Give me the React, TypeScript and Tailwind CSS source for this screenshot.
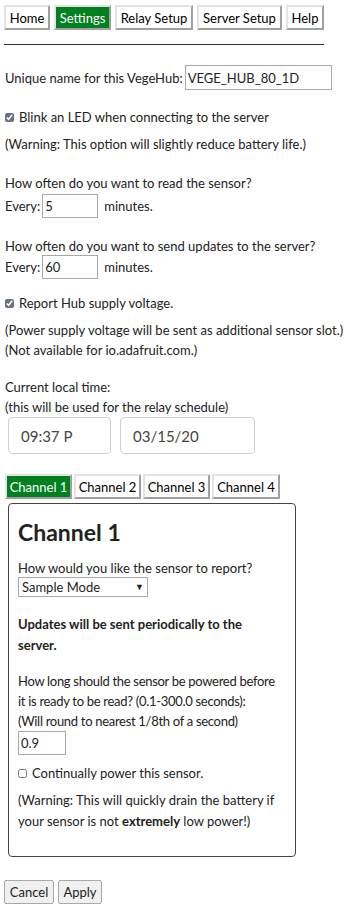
import React from 'react';

const btn =
  'whitespace-nowrap border-2 border-t-[#e3e3e3] border-l-[#e3e3e3] border-r-[#a0a0a0] border-b-[#a0a0a0] h-[25px] leading-[20px] flex items-center justify-center';

function NavButton({ label, active, w }: { label: string; active?: boolean; w: string }) {
  return (
    <button className={`${btn} ${w} ${active ? 'bg-[#008020] text-white' : 'bg-white text-black'}`}>{label}</button>
  );
}

export default function App() {
  return (
    <div className="w-[345px] h-[914px] bg-white text-[13px] leading-[20px] text-[#222] font-['Lato',sans-serif] pl-[5px] overflow-hidden">
      <div className="flex gap-[4px] pt-[5px] -ml-[1px] text-[13px]">
        <NavButton label="Home" w="w-[46px]" />
        <NavButton label="Settings" active w="w-[57px]" />
        <NavButton label="Relay Setup" w="w-[78px]" />
        <NavButton label="Server Setup" w="w-[85px]" />
        <NavButton label="Help" w="w-[38px]" />
      </div>
      <div className="mt-[14px] -ml-[1px] w-[320px] border-t border-[#333]" />

      <div className="mt-[20px] flex items-center whitespace-nowrap">
        <span>Unique name for this VegeHub:</span>
        <input
          className="ml-[2px] w-[147px] h-[25px] border border-[#a9a9a9] px-[2px] text-[13px]"
          defaultValue="VEGE_HUB_80_1D"
        />
      </div>

      <label className="mt-[17px] flex items-center gap-[5px]">
        <input type="checkbox" defaultChecked className="w-[9px] h-[9px] accent-gray-500" />
        <span>Blink an LED when connecting to the server</span>
      </label>
      <p className="mt-[7px]">(Warning: This option will slightly reduce battery life.)</p>

      <p className="mt-[19px]">How often do you want to read the sensor?</p>
      <div className="mt-[1px] flex items-center">
        <span>Every:</span>
        <input className="ml-[2px] w-[56px] h-[24px] border border-[#a9a9a9] px-[2px]" defaultValue="5" />
        <span className="ml-[6px]">minutes.</span>
      </div>

      <p className="mt-[18px] whitespace-nowrap">How often do you want to send updates to the server?</p>
      <div className="-mt-[1px] flex items-center">
        <span>Every:</span>
        <input className="ml-[2px] w-[56px] h-[24px] border border-[#a9a9a9] px-[2px]" defaultValue="60" />
        <span className="ml-[6px]">minutes.</span>
      </div>

      <label className="mt-[14px] flex items-center gap-[5px]">
        <input type="checkbox" defaultChecked className="w-[9px] h-[9px] accent-gray-500" />
        <span>Report Hub supply voltage.</span>
      </label>
      <p className="mt-[7px] whitespace-nowrap">(Power supply voltage will be sent as additional sensor slot.)</p>
      <p>(Not available for io.adafruit.com.)</p>

      <p className="mt-[17px]">Current local time:</p>
      <p>(this will be used for the relay schedule)</p>
      <div className="ml-[3px] flex gap-[9px]">
        <div className="w-[103px] h-[37px] border border-[#d0d0d0] rounded-[4px] pl-[12px] flex items-center text-[15px] text-[#444]">
          09:37 P
        </div>
        <div className="w-[135px] h-[37px] border border-[#d0d0d0] rounded-[4px] pl-[12px] flex items-center text-[15px] text-[#444]">
          03/15/20
        </div>
      </div>

      <div className="mt-[20px] flex gap-[2px] text-[13px]">
        <NavButton label="Channel 1" active w="w-[67px]" />
        <NavButton label="Channel 2" w="w-[67px]" />
        <NavButton label="Channel 3" w="w-[67px]" />
        <NavButton label="Channel 4" w="w-[68px]" />
      </div>

      <div className="mt-[4px] ml-[3px] w-[288px] h-[354px] border border-[#444] rounded-[4px] pl-[9px] pr-[2px]">
        <h2 className="mt-[13px] text-[23px] leading-[30px] font-bold text-[#222]">Channel 1</h2>
        <p className="mt-[11px]">How would you like the sensor to report?</p>
        <div className="-mt-[1px] w-[130px] h-[20px] border border-[#a9a9a9] flex items-center justify-between px-[3px]">
          <span>Sample Mode</span>
          <span className="text-[9px]">▼</span>
        </div>
        <p className="mt-[17px] font-bold leading-[21px]">
          Updates will be sent periodically to the
          <br />
          server.
        </p>
        <p className="mt-[15px] whitespace-nowrap tracking-[-0.3px]">
          How long should the sensor be powered before
          <br />
          it is ready to be read? (0.1-300.0 seconds):
          <br />
          (Will round to nearest 1/8th of a second)
        </p>
        <input className="w-[48px] h-[24px] border border-[#a9a9a9] px-[2px] text-[13px]" defaultValue="0.9" />
        <label className="mt-[8px] flex items-center gap-[5px]">
          <input type="checkbox" className="w-[9px] h-[9px]" />
          <span>Continually power this sensor.</span>
        </label>
        <p className="mt-[7px] leading-[21px]">
          (Warning: This will quickly drain the battery if
          <br />
          your sensor is not <b>extremely</b> low power!)
        </p>
      </div>

      <div className="mt-[23px] flex gap-[4px] -ml-[1px] text-[13px]">
        <button className="w-[50px] h-[24px] border border-[#a9a9a9] bg-[#f0f0f0] rounded-[2px]">Cancel</button>
        <button className="w-[44px] h-[24px] border border-[#a9a9a9] bg-[#f0f0f0] rounded-[2px]">Apply</button>
      </div>
    </div>
  );
}
